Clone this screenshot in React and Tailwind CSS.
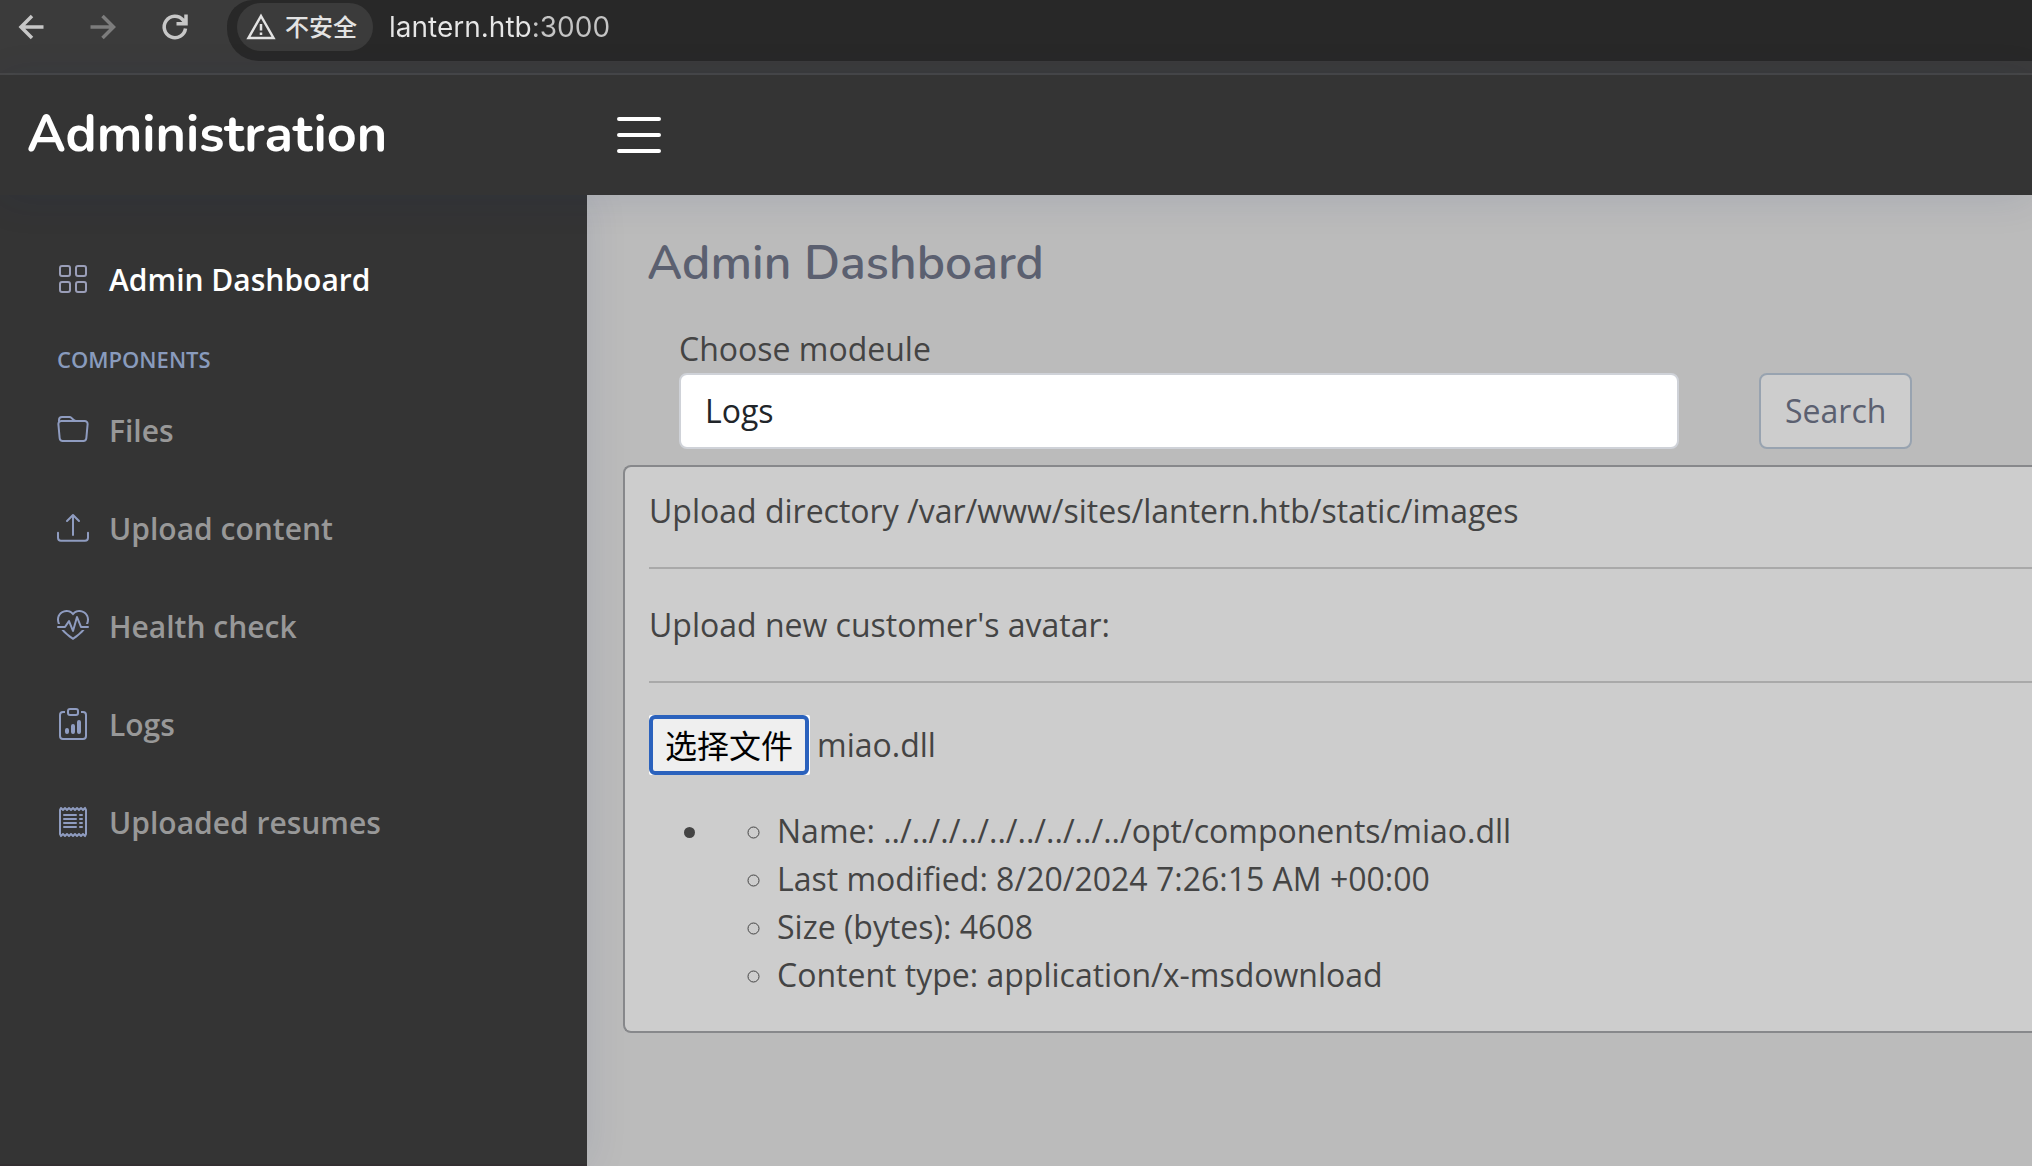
import {
  BsClipboardData,
  BsFolder,
  BsGrid,
  BsHeartPulse,
  BsList,
  BsReceipt,
  BsUpload,
} from "react-icons/bs";

const navItems = [
  { label: "Files", Icon: BsFolder },
  { label: "Upload content", Icon: BsUpload },
  { label: "Health check", Icon: BsHeartPulse },
  { label: "Logs", Icon: BsClipboardData },
  { label: "Uploaded resumes", Icon: BsReceipt },
];

const fileDetails = [
  "Name: ../.././../../../../../../opt/components/miao.dll",
  "Last modified: 8/20/2024 7:26:15 AM +00:00",
  "Size (bytes): 4608",
  "Content type: application/x-msdownload",
];

function BrowserIcon({ children, className }) {
  return (
    <svg
      viewBox="0 0 36 36"
      className={className}
      fill="none"
      stroke="currentColor"
      strokeWidth="3.5"
      aria-hidden="true"
    >
      {children}
    </svg>
  );
}

function BrowserBar() {
  return (
    <div className="flex h-[75px] items-start border-b-2 border-[#474747] bg-[#3b3b3b]">
      <div className="flex h-[54px] shrink-0 items-center pl-[13px] text-[#c7c7c7]">
        <button type="button" aria-label="Back">
          <BrowserIcon className="size-9">
            <path d="M19 7 8 18l11 11M8 18h22.500" />
          </BrowserIcon>
        </button>
        <button type="button" aria-label="Forward" className="ml-9 text-[#7c7c7c]">
          <BrowserIcon className="size-9">
            <path d="M17.500 7l11 11-11 11M28 18H5.500" />
          </BrowserIcon>
        </button>
        <button type="button" aria-label="Reload" className="ml-9">
          <BrowserIcon className="size-9">
            <path d="M28.500 19.500A10.700 10.700 0 1 1 26 11l3 3.500M29 5.500v9.300H19.500" />
          </BrowserIcon>
        </button>
      </div>
      <div className="ml-[34px] flex h-[61px] flex-1 items-start rounded-l-[32px] rounded-tl-[26px] bg-[#282828] pt-[3px] pl-[10px]">
        <button
          type="button"
          className="flex h-12 items-center gap-2 rounded-full bg-[#3b3b3b] pr-4 pl-2 font-['Noto_Sans_CJK_SC',sans-serif] text-2xl leading-none font-medium text-[#e3e3e3]"
        >
          <svg viewBox="0 0 32 32" className="size-8" fill="none" stroke="currentColor" aria-hidden="true">
            <path d="M16 5 28.500 27H3.500Z" strokeWidth="2.500" />
            <path d="M16 13v6.500M16 21.500v2.500" strokeWidth="2.500" />
          </svg>
          <span className="pb-0.5">不安全</span>
        </button>
        <input
          type="text"
          aria-label="Address"
          defaultValue="lantern.htb:3000"
          className="ml-4 h-12 min-w-0 flex-1 bg-[linear-gradient(to_right,#e6e6e6_143px,#c4c4c4_143px)] bg-clip-text font-[Inter,sans-serif] text-[28px] text-transparent caret-[#e6e6e6]"
        />
      </div>
    </div>
  );
}

function Header() {
  return (
    <header className="relative z-20 flex h-[120px] items-center bg-[#343434] shadow-[0_4px_40px_rgba(1,41,112,0.1)]">
      <a
        href="#"
        className="w-[607px] shrink-0 pb-0.5 pl-[27px] font-[Nunito,Lato,sans-serif] text-[52px] leading-none font-bold text-white"
      >
        Administration
      </a>
      <button type="button" aria-label="Toggle sidebar" className="text-white">
        <BsList className="size-16" />
      </button>
    </header>
  );
}

function Sidebar() {
  return (
    <aside className="relative z-10 w-[587px] shrink-0 border-b-2 border-[#332f31] bg-[#343434] px-[57px] pt-10 font-['Open_Sans',sans-serif] shadow-[0_0_40px_rgba(1,41,112,0.1)]">
      <nav className="text-[30px] font-semibold">
        <a href="#" className="flex h-[88px] items-center gap-5 text-white">
          <BsGrid className="size-8 text-[#9a9eb8]" />
          Admin Dashboard
        </a>
        <h2 className="mt-5 mb-[11px] text-[22px] leading-8 font-semibold text-[#899bbd] uppercase">Components</h2>
        <ul className="flex flex-col gap-[10px]">
          {navItems.map(({ label, Icon }) => (
            <li key={label}>
              <a href="#" className="flex h-[88px] items-center gap-5 text-[#989898]">
                <Icon className="size-8 text-[#8f9cc0]" />
                {label}
              </a>
            </li>
          ))}
        </ul>
      </nav>
    </aside>
  );
}

function Dashboard() {
  return (
    <main className="min-w-0 flex-1 bg-[#bbbbbb] pt-10 pl-9 font-['Open_Sans',sans-serif] text-[32px] leading-[48px] text-[#444444]">
      <h1 className="pl-6 font-[Nunito,Lato,sans-serif] text-[48px] leading-[56px] font-semibold text-[#5b6070]">
        Admin Dashboard
      </h1>
      <form className="mt-[34px] pl-14" onSubmit={(e) => e.preventDefault()}>
        <label htmlFor="module" className="block">
          Choose modeule
        </label>
        <div className="flex gap-20">
          <input
            id="module"
            type="text"
            defaultValue="Logs"
            className="h-[76px] w-[1000px] min-w-0 rounded-lg border-2 border-[#cfd2d8] bg-white px-6 pb-0.5 text-[#212529]"
          />
          <button
            type="submit"
            className="h-[76px] shrink-0 rounded-lg border-2 border-[#98a3b0] bg-[#cdcdcd] px-6 text-[#5b6070]"
          >
            Search
          </button>
        </div>
      </form>
      <section className="mt-4 rounded-l-lg border-2 border-r-0 border-[#87888b] bg-[#cdcdcd] pt-5 pb-8 pl-6">
        <p>Upload directory /var/www/sites/lantern.htb/static/images</p>
        <hr className="my-8 border-t-2 border-[#a9a9a9]" />
        <p>Upload new customer's avatar:</p>
        <hr className="my-8 border-t-2 border-[#a9a9a9]" />
        <div className="flex items-center gap-[7px]">
          <input id="avatar" type="file" className="sr-only" />
          <label htmlFor="avatar" className="rounded-xs bg-white pr-px">
            <span className="flex h-[60px] items-center rounded-md border-4 border-[#2b62bd] bg-[#efefef] px-3 pb-0.5 font-['Noto_Sans_CJK_SC',sans-serif] text-black">
              选择文件
            </span>
          </label>
          <span>miao.dll</span>
        </div>
        <ul className="mt-8 list-disc pl-16">
          <li>
            <ul className="list-[circle] pl-16">
              {fileDetails.map((detail) => (
                <li key={detail}>{detail}</li>
              ))}
            </ul>
          </li>
        </ul>
      </section>
    </main>
  );
}

export default function App() {
  return (
    <div className="flex min-h-screen flex-col overflow-hidden">
      <BrowserBar />
      <Header />
      <div className="flex flex-1">
        <Sidebar />
        <Dashboard />
      </div>
    </div>
  );
}
